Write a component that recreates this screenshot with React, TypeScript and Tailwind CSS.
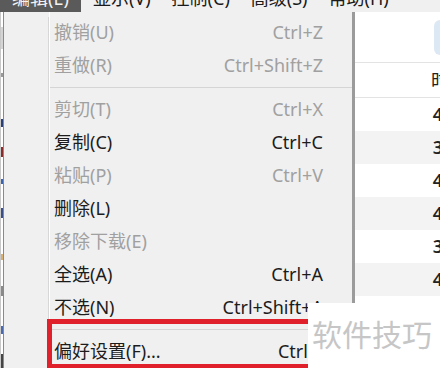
export default function App() {
  const rows: { label: string; key?: string; on: boolean; sep?: boolean }[] = [
    { label: '撤销(U)', key: 'Ctrl+Z', on: false },
    { label: '重做(R)', key: 'Ctrl+Shift+Z', on: false, sep: true },
    { label: '剪切(T)', key: 'Ctrl+X', on: false },
    { label: '复制(C)', key: 'Ctrl+C', on: true },
    { label: '粘贴(P)', key: 'Ctrl+V', on: false },
    { label: '删除(L)', on: true },
    { label: '移除下载(E)', on: false },
    { label: '全选(A)', key: 'Ctrl+A', on: true },
    { label: '不选(N)', key: 'Ctrl+Shift+A', on: true, sep: true },
    { label: '偏好设置(F)...', key: 'Ctrl+,', on: true },
  ];

  const table = ['white', 'gray', 'white', 'gray', 'white', 'gray', 'white'];
  const nums = ['4', '3', '4', '4', '3', '4', ''];

  return (
    <div
      className="relative w-[440px] h-[368px] overflow-hidden bg-white text-[18px]"
      style={{ fontFamily: '"Noto Sans", "Noto Sans CJK SC", sans-serif' }}
    >
      {/* menu bar, mostly scrolled off the top */}
      <div className="flex h-[12px] items-end overflow-hidden bg-[#f0f0f0] text-[#1a1a1a]">
        <div className="h-[28px] w-[81px] bg-[#5a5a5a] pl-[12px] leading-[28px] text-[#f2f2f2]">编辑(E)</div>
        <div className="ml-[12px] flex h-[28px] gap-[21px] leading-[28px]">
          <span>显示(V)</span>
          <span>控制(C)</span>
          <span>高级(S)</span>
          <span>帮助(H)</span>
        </div>
      </div>

      <div className="flex h-[356px]">
        {/* sliver of the window behind */}
        <div className="flex w-[3px] flex-col border-l border-[#c8c8c8] bg-white">
          <div className="mt-[15px] h-[22px] bg-[#d4d4d4]" />
          <div className="mt-[24px] h-[4px] bg-[#9a9a9a]" />
          <div className="mt-[42px] h-[8px] bg-[#2a3f7a]" />
          <div className="mt-[20px] h-[10px] bg-[#8a2a2a]" />
          <div className="mt-[22px] h-[6px] bg-[#3a64b0]" />
          <div className="mt-[24px] h-[10px] bg-[#3a4f8a]" />
          <div className="mt-[36px] h-[6px] bg-[#d8b070]" />
          <div className="mt-[26px] h-[10px] bg-[#8a8a8a]" />
          <div className="mt-[30px] h-[8px] bg-[#4a6ab0]" />
          <div className="mt-[20px] h-[14px] bg-[#444]" />
        </div>

        {/* edit menu */}
        <div className="flex w-[352px] border-l border-r-[3px] border-l-[#8a8a8a] border-r-[#9b9b9b] bg-[#f0f0f0]">
          <div className="mt-[5px] w-[45px] border-r border-[#d7d7d7]" />
          <div className="flex flex-1 flex-col border-l border-white pt-[4px]">
            {rows.map((r) => (
              <div key={r.label}>
                <div
                  className={`flex h-[33px] items-center justify-between pl-[4px] pr-[29px] ${
                    r.on ? 'text-[#1c1c1c]' : 'text-[#a0a0a0]'
                  }`}
                >
                  <span>{r.label}</span>
                  {r.key && <span>{r.key}</span>}
                </div>
                {r.sep && (
                  <div className="flex h-[11px] items-center">
                    <div className="h-[1px] w-full bg-[#d5d5d5]" />
                  </div>
                )}
              </div>
            ))}
          </div>
        </div>

        {/* table behind the menu */}
        <div className="flex flex-1 flex-col bg-white text-[#222]">
          <div className="flex h-[51px] justify-end border-b border-[#e3e3e3] pt-[8px]">
            <div className="h-[35px] w-[6px] rounded-l-[6px] bg-[#dde8f5]" />
          </div>
          <div className="flex h-[35px] items-center justify-end border-b border-[#e3e3e3] leading-none">
            <span className="-mr-[9px]">时</span>
          </div>
          {table.map((t, i) => (
            <div
              key={i}
              className={`flex h-[33px] items-center justify-end font-semibold ${t === 'gray' ? 'bg-[#f3f3f3]' : 'bg-white'}`}
            >
              <span className="-mr-[3px]">{nums[i]}</span>
            </div>
          ))}
        </div>
      </div>

      {/* annotation box */}
      <div className="absolute left-[47px] top-[319px] h-[49px] w-[300px] border-[5px] border-b-[4px] border-[#e0202a]" />

      {/* watermark */}
      <div className="absolute left-[308px] top-[303px] flex h-[65px] w-[132px] items-start bg-white pl-[4px] pt-[12px]">
        <span className="text-[30px] leading-[40px] text-[#c6c6c6]">软件技巧</span>
      </div>
    </div>
  );
}
